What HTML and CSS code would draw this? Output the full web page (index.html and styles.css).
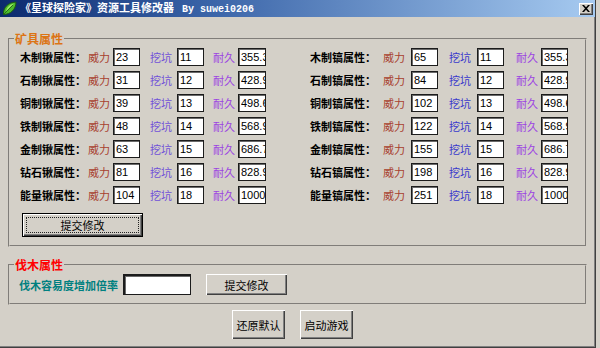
FILE: index.html
```html
<!DOCTYPE html>
<html lang="zh-CN">
<head>
<meta charset="utf-8">
<title>星球探险家 资源工具修改器</title>
<link rel="stylesheet" href="styles.css">
</head>
<body>
<div class="window">
  <div class="titlebar">
    <svg class="app-icon" width="15" height="15" viewBox="0 0 15 15">
      <path d="M1.5 13.5 C1 7 5.5 1.5 14 1 C14 8.5 8.5 13.5 1.5 13.5 Z" fill="#4cbb2c" stroke="#1e5a12" stroke-width="1"/>
      <path d="M4 10.5 C5 6 8 3.5 12 2.5 C9 5 7 7.5 4 10.5 Z" fill="#a4ec6c"/>
      <path d="M1.5 13.5 L11 4" stroke="#1e5a12" stroke-width="0.8" fill="none"/>
    </svg>
    <span class="title">《星球探险家》资源工具修改器<span class="by">By suwei0206</span></span>
    <button class="close" type="button" aria-label="关闭">
      <svg width="8" height="7" viewBox="0 0 8 7"><path d="M0 0h2l2 2.2L6 0h2L5 3.5 8 7H6L4 4.8 2 7H0l3-3.5z" fill="#000"/></svg>
    </button>
  </div>
  <div class="client">
    <fieldset class="group ore">
      <legend class="legend-ore">矿具属性</legend>
      <div class="ore-grid">
        <span class="name">木制锹属性：</span><span class="k power">威力</span><input class="num" value="23"><span class="k dig pl10">挖坑</span><input class="num" value="11"><span class="k dur pl9">耐久</span><input class="num w28" value="355.3">
        <span class="name pl44">木制镐属性：</span><span class="k power">威力</span><input class="num" value="65"><span class="k dig2 pl11">挖坑</span><input class="num" value="11"><span class="k dur pl12">耐久</span><input class="num" value="355.3">

        <span class="name">石制锹属性：</span><span class="k power">威力</span><input class="num" value="31"><span class="k dig pl10">挖坑</span><input class="num" value="12"><span class="k dur pl9">耐久</span><input class="num w28" value="428.9">
        <span class="name pl44">石制镐属性：</span><span class="k power">威力</span><input class="num" value="84"><span class="k dig2 pl11">挖坑</span><input class="num" value="12"><span class="k dur pl12">耐久</span><input class="num" value="428.9">

        <span class="name">铜制锹属性：</span><span class="k power">威力</span><input class="num" value="39"><span class="k dig pl10">挖坑</span><input class="num" value="13"><span class="k dur pl9">耐久</span><input class="num w28" value="498.6">
        <span class="name pl44">铜制镐属性：</span><span class="k power">威力</span><input class="num" value="102"><span class="k dig2 pl11">挖坑</span><input class="num" value="13"><span class="k dur pl12">耐久</span><input class="num" value="498.6">

        <span class="name">铁制锹属性：</span><span class="k power">威力</span><input class="num" value="48"><span class="k dig pl10">挖坑</span><input class="num" value="14"><span class="k dur pl9">耐久</span><input class="num w28" value="568.9">
        <span class="name pl44">铁制镐属性：</span><span class="k power">威力</span><input class="num" value="122"><span class="k dig2 pl11">挖坑</span><input class="num" value="14"><span class="k dur pl12">耐久</span><input class="num" value="568.9">

        <span class="name">金制锹属性：</span><span class="k power">威力</span><input class="num" value="63"><span class="k dig pl10">挖坑</span><input class="num" value="15"><span class="k dur pl9">耐久</span><input class="num w28" value="686.7">
        <span class="name pl44">金制镐属性：</span><span class="k power">威力</span><input class="num" value="155"><span class="k dig2 pl11">挖坑</span><input class="num" value="15"><span class="k dur pl12">耐久</span><input class="num" value="686.7">

        <span class="name">钻石锹属性：</span><span class="k power">威力</span><input class="num" value="81"><span class="k dig pl10">挖坑</span><input class="num" value="16"><span class="k dur pl9">耐久</span><input class="num w28" value="828.9">
        <span class="name pl44">钻石镐属性：</span><span class="k power">威力</span><input class="num" value="198"><span class="k dig2 pl11">挖坑</span><input class="num" value="16"><span class="k dur pl12">耐久</span><input class="num" value="828.9">

        <span class="name">能量锹属性：</span><span class="k power">威力</span><input class="num" value="104"><span class="k dig pl10">挖坑</span><input class="num" value="18"><span class="k dur pl9">耐久</span><input class="num w28" value="1000">
        <span class="name pl44">能量镐属性：</span><span class="k power">威力</span><input class="num" value="251"><span class="k dig2 pl11">挖坑</span><input class="num" value="18"><span class="k dur pl12">耐久</span><input class="num" value="1000">
      </div>
      <button class="btn btn-default" type="button"><span class="focus">提交修改</span></button>
    </fieldset>

    <fieldset class="group wood">
      <legend class="legend-wood">伐木属性</legend>
      <div class="wood-row">
        <span class="wood-label">伐木容易度增加倍率</span>
        <input class="rate" value="">
        <button class="btn btn-wood" type="button">提交修改</button>
      </div>
    </fieldset>

    <div class="actions">
      <button class="btn btn-big" type="button">还原默认</button>
      <button class="btn btn-big" type="button">启动游戏</button>
    </div>
  </div>
</div>
</body>
</html>
```

FILE: styles.css
```css
html, body {
  margin: 0;
  padding: 0;
}
body {
  background: #d6d2ca;
  width: 600px;
  height: 348px;
  overflow: hidden;
  font-family: "Noto Sans CJK SC", "Noto Sans", sans-serif;
  font-size: 11px;
  color: #000;
}
.window {
  box-sizing: border-box;
  width: 596px;
  height: 348px;
  background: #d4d0c8;
  border-right: 1px solid #404040;
  border-bottom: 1px solid #404040;
  box-shadow: inset -1px -1px 0 #808080;
  display: flex;
  flex-direction: column;
}
.titlebar {
  height: 17px;
  flex: none;
  display: flex;
  align-items: center;
  background: linear-gradient(to right, #0c2a6e 0%, #3a64a8 35%, #a6caf0 100%);
  color: #fff;
  padding-left: 2px;
}
.app-icon {
  flex: none;
  display: block;
}
.title {
  margin-left: 3px;
  font-weight: bold;
  font-size: 11px;
  line-height: 15px;
  white-space: nowrap;
  flex: 1;
}
.by {
  margin-left: 8px;
  font-family: "Liberation Mono", "DejaVu Sans Mono", monospace;
  font-size: 10px;
  font-weight: bold;
}
.close {
  flex: none;
  width: 14px;
  height: 12px;
  margin-right: 2px;
  padding: 0;
  background: #d4d0c8;
  border: none;
  box-shadow: inset 1px 1px 0 #fff, inset -1px -1px 0 #404040, inset -2px -2px 0 #808080;
  display: flex;
  align-items: center;
  justify-content: center;
}
.client {
  flex: 1;
  display: flex;
  flex-direction: column;
  padding: 0 0 0 8px;
}
.group {
  box-sizing: border-box;
  width: 579px;
  margin: 0;
  border: 2px groove #d4d0c8;
  min-inline-size: 0;
}
.group legend {
  font-weight: bold;
  font-size: 12px;
  line-height: 14px;
  padding: 0 1px;
}
.ore {
  margin-top: 15px;
  padding: 2px 0 8px 10px;
}
.legend-ore {
  color: #dc7414;
  margin-left: -6px;
}
.ore-grid {
  display: grid;
  grid-template-columns: 68px 25px 27px 37px 27px 34px 28px 117px 28px 27px 39px 27px 37px 27px;
  grid-auto-rows: 18px;
  row-gap: 5px;
  align-items: center;
}
.name {
  font-weight: bold;
  white-space: nowrap;
  line-height: 14px;
}
.k {
  white-space: nowrap;
  line-height: 14px;
}
.power { color: #a8402e; }
.dig { color: #7050d8; }
.dig2 { color: #3838cc; }
.dur { color: #9c44e2; }
.pl9 { padding-left: 9px; }
.pl10 { padding-left: 10px; }
.pl11 { padding-left: 11px; }
.pl12 { padding-left: 12px; }
.pl44 { padding-left: 44px; }

.num, .rate {
  box-sizing: border-box;
  margin: 0;
  height: 18px;
  width: 27px;
  padding: 0 0 0 2px;
  background: #fff;
  border: 1px solid #1c1c1c;
  box-shadow: inset 1px 1px 0 #6a6a6a;
  font-family: "Liberation Sans", Arial, sans-serif;
  font-size: 11px;
  color: #000;
  outline: none;
}
.w28 { width: 28px; }

.btn {
  box-sizing: border-box;
  margin: 0;
  padding: 0;
  background: #d4d0c8;
  border: none;
  box-shadow: inset 1px 1px 0 #fff, inset -1px -1px 0 #404040, inset -2px -2px 0 #808080;
  font-family: "Noto Sans CJK SC", "Noto Sans", sans-serif;
  font-size: 11px;
  color: #000;
}
.btn-default {
  width: 121px;
  height: 24px;
  margin: 9px 0 0 2px;
  border: 1px solid #000;
  padding: 3px;
  display: flex;
}
.btn-default .focus {
  flex: 1;
  border: 1px dotted #222;
  display: flex;
  align-items: center;
  justify-content: center;
  line-height: 14px;
}

.wood {
  margin-top: 11px;
  padding: 2px 0 8px 9px;
}
.legend-wood {
  color: #ff0000;
  margin-left: -5px;
}
.wood-row {
  display: flex;
  align-items: center;
  height: 21px;
}
.wood-label {
  color: #008080;
  font-weight: bold;
  width: 104px;
  white-space: nowrap;
  line-height: 14px;
}
.rate {
  width: 68px;
  height: 21px;
  box-shadow: inset 1px 1px 0 #6a6a6a;
  border-width: 2px 1px 1px 2px;
}
.btn-wood {
  width: 81px;
  height: 21px;
  margin-left: 15px;
}
.actions {
  display: flex;
  gap: 15px;
  padding-left: 224px;
  margin-top: 5px;
}
.btn-big {
  width: 53px;
  height: 29px;
}
```
